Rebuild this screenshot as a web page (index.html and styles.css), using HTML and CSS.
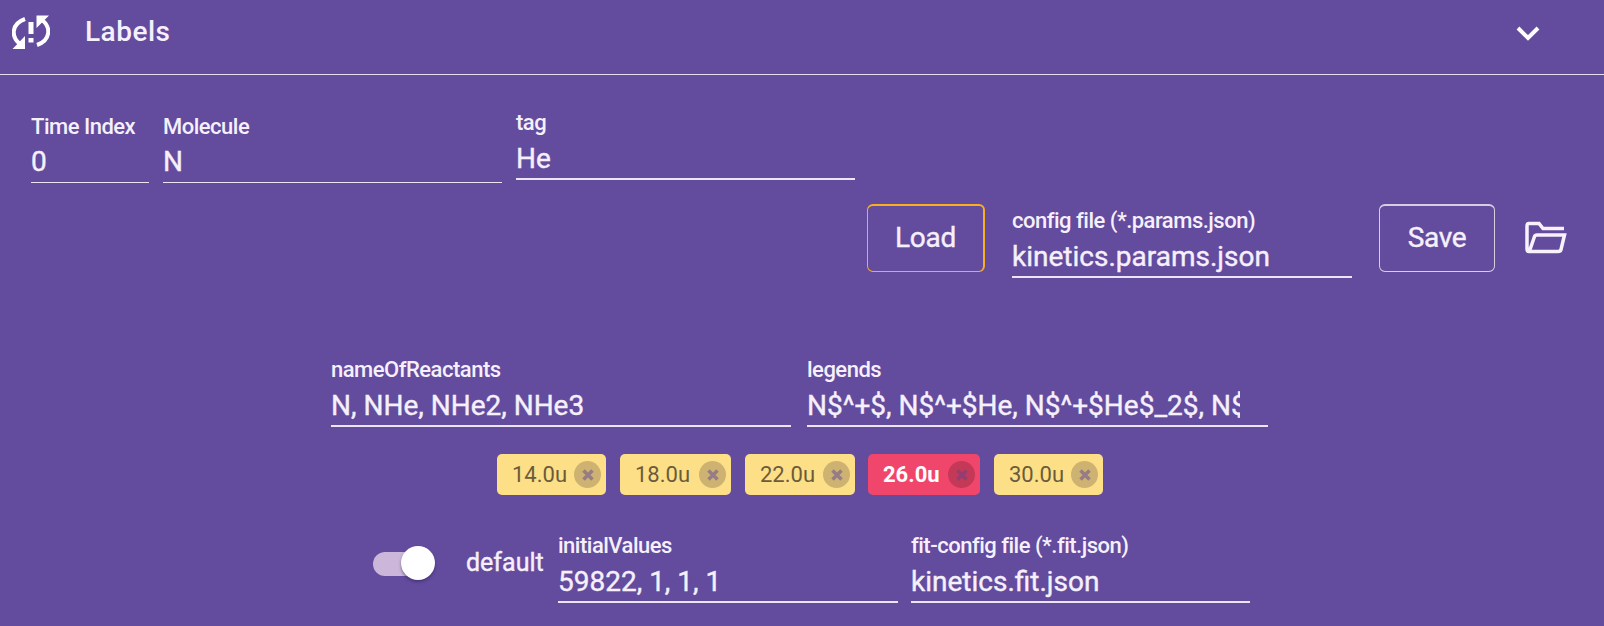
FILE: index.html
```html
<!DOCTYPE html>
<html lang="en">
<head>
<meta charset="utf-8">
<title>Labels</title>
<link rel="stylesheet" href="styles.css">
</head>
<body>
<header class="header">
  <svg class="sync-icon" viewBox="0 0 38 36" fill="none">
    <path d="M13 5C-1 10 -1 23 8 30M25 31C39 26 39 13 30 6" stroke="#fff" stroke-width="4"/>
    <path d="M13 22V35H0.500ZM24.500 14V1.500H37Z" fill="#fff"/>
    <path d="M16.500 8H21.500V20H16.500ZM16.500 24H21.500V28.500H16.500Z" fill="#fff"/>
  </svg>
  <span class="title">Labels</span>
  <svg class="chevron" viewBox="0 0 24 15" fill="none"><path d="M2 2L12 12L22 2" stroke="#fff" stroke-width="4"/></svg>
</header>
<main>
  <section class="row row-molecule">
    <div class="field thin narrow"><label>Time Index</label><div class="value">0</div></div>
    <div class="field thin"><label>Molecule</label><div class="value">N</div></div>
    <div class="field"><label>tag</label><div class="value">He</div></div>
  </section>
  <section class="row row-config">
    <button class="btn load">Load</button>
    <div class="field"><label>config file (*.params.json)</label><div class="value">kinetics.params.json</div></div>
    <button class="btn save">Save</button>
    <svg class="folder" viewBox="0 0 42 33" fill="none" stroke="#f7f2fc" stroke-width="3.500">
      <path d="M39 7.500H18L14 2.500H4Q2 2.500 2 5V28Q2 30.500 4 30.500H33Q35.500 30.500 36 28.500L39.500 14H12Q10 14 9.500 15.500L4.500 30"/>
    </svg>
  </section>
  <section class="row row-names">
    <div class="field wide"><label>nameOfReactants</label><div class="value">N, NHe, NHe2, NHe3</div></div>
    <div class="field wide legends"><label>legends</label><div class="value clipped">N$^+$, N$^+$He, N$^+$He$_2$, N$</div></div>
  </section>
  <section class="row chips">
    <div class="chip"><span>14.0u</span><i class="close"><svg viewBox="0 0 12 12"><path d="M1.500 1.500L10.500 10.500M10.500 1.500L1.500 10.500"/></svg></i></div>
    <div class="chip"><span>18.0u</span><i class="close"><svg viewBox="0 0 12 12"><path d="M1.500 1.500L10.500 10.500M10.500 1.500L1.500 10.500"/></svg></i></div>
    <div class="chip"><span>22.0u</span><i class="close"><svg viewBox="0 0 12 12"><path d="M1.500 1.500L10.500 10.500M10.500 1.500L1.500 10.500"/></svg></i></div>
    <div class="chip active"><span>26.0u</span><i class="close"><svg viewBox="0 0 12 12"><path d="M1.500 1.500L10.500 10.500M10.500 1.500L1.500 10.500"/></svg></i></div>
    <div class="chip"><span>30.0u</span><i class="close"><svg viewBox="0 0 12 12"><path d="M1.500 1.500L10.500 10.500M10.500 1.500L1.500 10.500"/></svg></i></div>
  </section>
  <section class="row row-fit">
    <div class="toggle"><div class="thumb"></div></div>
    <span class="toggle-label">default</span>
    <div class="field"><label>initialValues</label><div class="value">59822, 1, 1, 1</div></div>
    <div class="field"><label>fit-config file (*.fit.json)</label><div class="value">kinetics.fit.json</div></div>
  </section>
</main>
</body>
</html>
```
FILE: styles.css
```css
* { box-sizing: border-box; }
body {
  margin: 0;
  height: 626px;
  overflow: hidden;
  background: #634b9e;
  color: #f5f0fb;
  font-family: Roboto, "Liberation Sans", sans-serif;
}
.header {
  display: flex;
  height: 75px;
  padding: 14px 64px 0 12px;
  border-bottom: 1px solid #e6e0ee;
}
.sync-icon { width: 38px; height: 36px; }
.title {
  margin-left: 35px;
  font-size: 28px;
  font-weight: 500;
  letter-spacing: 0.500px;
  line-height: 36px;
}
.chevron { width: 24px; height: 15px; margin: 12px 0 0 auto; }
.row { display: flex; }
.field { width: 340px; height: 70px; border-bottom: 2px solid #ece6f4; }
.field label {
  display: block;
  font-size: 22px;
  font-weight: 500;
  letter-spacing: -0.500px;
  line-height: 26px;
  white-space: nowrap;
}
.value {
  margin-top: 4px;
  font-size: 28px;
  line-height: 38px;
  white-space: nowrap;
}
.value, .btn, .toggle-label { -webkit-text-stroke: 0.400px #f5f0fb; }
.clipped { width: 433px; overflow: hidden; }
.thin { height: 69px; margin-top: 4px; border-bottom-width: 1px; }
.thin .value { margin-top: 3px; }
.narrow { width: 118px; }
.wide { width: 460px; }
.row-molecule { gap: 14px; height: 129px; padding: 35px 0 0 31px; }
.row-molecule .thin:nth-child(2) { width: 339px; }
.row-molecule .field:last-child { width: 339px; }
.row-config { height: 153px; padding-left: 867px; }
.btn {
  height: 68px;
  border: 1px solid #d5cfe0;
  border-top-width: 2px;
  border-radius: 6px;
  background: transparent;
  color: inherit;
  font: 28px/54px Roboto, sans-serif;
  letter-spacing: -0.300px;
  padding: 0 0 2px;
}
.load { width: 118px; border-color: #f8b01e; border-right-width: 2px; }
.save { width: 116px; }
.row-config .field { margin: 4px 27px 0; }
.folder { width: 42px; height: 33px; margin: 17px 0 0 30px; }
.row-names { gap: 16px; padding-left: 331px; }
.legends { width: 461px; }
.chips { gap: 14px; margin-top: 27px; padding-left: 497px; }
.chip {
  display: flex;
  align-items: center;
  justify-content: space-between;
  width: 110px;
  height: 41px;
  padding: 0 5px 0 15px;
  border-radius: 5px;
  background: #fcdf87;
  color: #6b5b3b;
  font-size: 22px;
}
.chip:first-child, .chip:last-child { width: 109px; }
.chip:nth-child(2) { width: 111px; }
.close {
  display: grid;
  place-items: center;
  width: 27px;
  height: 27px;
  border-radius: 50%;
  background: #ceb271;
}
.close svg { width: 12px; height: 12px; stroke: #967d84; stroke-width: 3.500; }
.chip.active { width: 112px; margin-left: -1px; background: #f1466b; color: #fff; font-weight: 700; }
.active .close { background: #c43957; }
.active .close svg { stroke: #933d73; }
.row-fit { margin-top: 38px; padding-left: 373px; }
.toggle { display: flow-root; width: 56px; height: 24px; margin-top: 19px; border-radius: 12px; background: #ccb7db; }
.thumb {
  width: 34px;
  height: 34px;
  margin: -6px 0 0 28px;
  border-radius: 50%;
  background: #fff;
  box-shadow: 0 2px 3px #33235588;
}
.toggle-label { width: 78px; margin: 16px 14px 0 37px; font-size: 25px; line-height: 28px; }
.row-fit .field + .field { width: 339px; margin-left: 13px; }
```
